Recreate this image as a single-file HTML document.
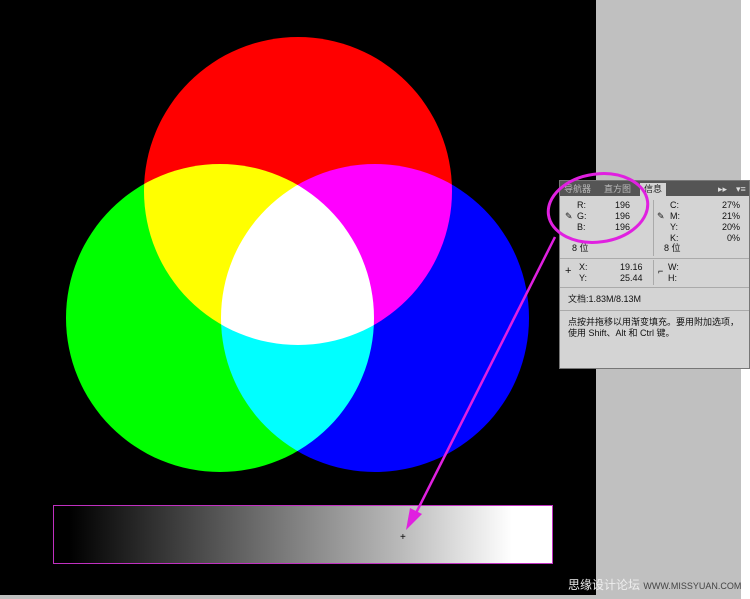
<!DOCTYPE html>
<html><head><meta charset="utf-8"><style>
body{margin:0;width:750px;height:599px;overflow:hidden;background:#c0c0c0;position:relative;font-family:"Liberation Sans","Noto Sans CJK SC",sans-serif}
#canvas{position:absolute;left:0;top:0;width:596px;height:595px;background:#000;overflow:hidden;isolation:isolate}
.c{position:absolute;width:308px;height:308px;border-radius:50%;mix-blend-mode:screen}
#strip{position:absolute;left:741px;top:0;width:9px;height:599px;background:#fff}
#panel{position:absolute;left:559px;top:180px;width:191px;height:189px;background:#d4d4d4;border:1px solid #777;box-sizing:border-box;font-size:9px;color:#111}
#tabs{height:15px;background:#555;position:relative}
.t{position:absolute;top:2px;height:13px;font-size:9px;color:#bbb;line-height:13px}
.r{position:absolute;font-size:9px;line-height:11px}
.hl{position:absolute;left:0;right:0;height:1px;background:#aaa}
.vl{position:absolute;width:1px;background:#aaa}
</style></head><body>
<div id="strip"></div>
<div id="canvas">
<div class="c" style="left:144px;top:37px;background:#f00"></div>
<div class="c" style="left:66px;top:164px;background:#0f0"></div>
<div class="c" style="left:221px;top:164px;background:#00f"></div>
<div style="position:absolute;left:53px;top:505px;width:498px;height:57px;border:1px solid #c030c0;background:linear-gradient(90deg,#000 3%,#777 45%,#bbb 70%,#fff 92%)"></div>
</div>
<div style="position:absolute;left:568px;top:576px;color:#eee;font-size:12px;white-space:nowrap">思缘设计论坛 <span style="font-size:9px;color:#444">WWW.MISSYUAN.COM</span></div>
<div id="panel">
<div id="tabs">
<div class="t" style="left:4px">导航器</div>
<div class="t" style="left:44px">直方图</div>
<div class="t" style="left:80px;background:#d4d4d4;color:#222;padding:0 4px">信息</div>
<div class="t" style="left:158px;color:#ddd">▸▸</div>
<div class="t" style="left:176px;color:#ddd">▾≡</div>
</div>
<div class="r" style="left:17px;top:19px;line-height:11px">R:<br>G:<br>B:</div>
<div class="r" style="left:55px;top:19px">196<br>196<br>196</div>
<div class="r" style="left:5px;top:30px">✎</div>
<div class="r" style="left:12px;top:62px">8 位</div>
<div class="vl" style="left:93px;top:19px;height:56px"></div>
<div class="r" style="left:110px;top:19px">C:<br>M:<br>Y:<br>K:</div>
<div class="r" style="left:150px;top:19px;text-align:right;width:30px">27%<br>21%<br>20%<br>0%</div>
<div class="r" style="left:97px;top:30px">✎</div>
<div class="r" style="left:104px;top:62px">8 位</div>
<div class="hl" style="top:77px"></div>
<div class="r" style="left:5px;top:85px;font-size:11px">+</div>
<div class="r" style="left:19px;top:81px">X:<br>Y:</div>
<div class="r" style="left:60px;top:81px">19.16<br>25.44</div>
<div class="vl" style="left:93px;top:79px;height:25px"></div>
<div class="r" style="left:98px;top:85px">⌐</div>
<div class="r" style="left:108px;top:81px">W:<br>H:</div>
<div class="hl" style="top:106px"></div>
<div class="r" style="left:8px;top:113px">文档:1.83M/8.13M</div>
<div class="hl" style="top:129px"></div>
<div class="r" style="left:8px;top:136px;width:172px">点按并拖移以用渐变填充。要用附加选项，使用 Shift、Alt 和 Ctrl 键。</div>
</div>
<svg style="position:absolute;left:0;top:0" width="750" height="599">
<ellipse cx="598" cy="208" rx="50" ry="34" fill="none" stroke="#e020e0" stroke-width="3" transform="rotate(-8 598 208)"/>
<line x1="555" y1="237" x2="415" y2="515" stroke="#e020e0" stroke-width="2.5"/>
<polygon points="406,530 410,508 422,514" fill="#e020e0"/>
</svg>
<div style="position:absolute;left:0;top:595px;width:741px;height:4px;background:#c0c0c0"></div>
<div style="position:absolute;left:400px;top:532px;font-size:10px;color:#000">+</div>
</body></html>
